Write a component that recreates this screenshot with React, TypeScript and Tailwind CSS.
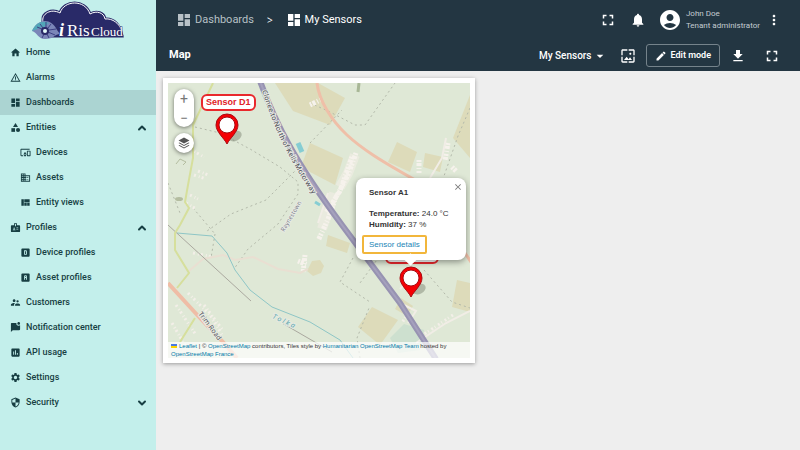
import type { ReactNode } from 'react';
import type { IconType } from 'react-icons';
import { ChevronDown, ChevronUp } from 'lucide-react';
import {
  MdAccountCircle,
  MdArrowDropDown,
  MdBadge,
  MdCategory,
  MdClose,
  MdDashboard,
  MdDevicesOther,
  MdDomain,
  MdEdit,
  MdFullscreen,
  MdGetApp,
  MdHome,
  MdInsertChart,
  MdMarkChatUnread,
  MdMoreVert,
  MdNotifications,
  MdSecurity,
  MdSettings,
  MdSupervisorAccount,
  MdViewQuilt,
  MdWallpaper,
  MdWarningAmber,
} from 'react-icons/md';

type MenuItem = {
  label: string;
  icon: IconType;
  child?: boolean;
  active?: boolean;
  toggle?: 'open' | 'closed';
};

const AlphaD = ({ className }: { className?: string }) => (
  <svg viewBox="0 0 24 24" fill="currentColor" className={className}>
    <path
      fillRule="evenodd"
      d="M5 3a2 2 0 0 0-2 2v14a2 2 0 0 0 2 2h14a2 2 0 0 0 2-2V5a2 2 0 0 0-2-2H5zm4 4h4a2 2 0 0 1 2 2v6a2 2 0 0 1-2 2H9V7zm2 2v6h2V9h-2z"
    />
  </svg>
);

const AlphaA = ({ className }: { className?: string }) => (
  <svg viewBox="0 0 24 24" fill="currentColor" className={className}>
    <path
      fillRule="evenodd"
      d="M5 3a2 2 0 0 0-2 2v14a2 2 0 0 0 2 2h14a2 2 0 0 0 2-2V5a2 2 0 0 0-2-2H5zm6 4h2a2 2 0 0 1 2 2v8h-2v-4h-2v4H9V9a2 2 0 0 1 2-2zm0 2v2h2V9h-2z"
    />
  </svg>
);

const menu: MenuItem[] = [
  { label: 'Home', icon: MdHome },
  { label: 'Alarms', icon: MdWarningAmber },
  { label: 'Dashboards', icon: MdDashboard, active: true },
  { label: 'Entities', icon: MdCategory, toggle: 'open' },
  { label: 'Devices', icon: MdDevicesOther, child: true },
  { label: 'Assets', icon: MdDomain, child: true },
  { label: 'Entity views', icon: MdViewQuilt, child: true },
  { label: 'Profiles', icon: MdBadge, toggle: 'open' },
  { label: 'Device profiles', icon: AlphaD, child: true },
  { label: 'Asset profiles', icon: AlphaA, child: true },
  { label: 'Customers', icon: MdSupervisorAccount },
  { label: 'Notification center', icon: MdMarkChatUnread },
  { label: 'API usage', icon: MdInsertChart },
  { label: 'Settings', icon: MdSettings },
  { label: 'Security', icon: MdSecurity, toggle: 'closed' },
];

const cloud =
  'M13 36V20c-1-6 8-12 17-7C34 0 55-1 60 14c7-4 14-1 15 5 9-1 15 6 17 17z';

const Logo = () => (
  <svg viewBox="0 0 96 40" className="ml-[30px] h-10 w-24" role="img" aria-label="iRisCloud">
    <path d={cloud} fill="#292a68" stroke="#292a68" strokeWidth="3" />
    <path d="M13 22c-2-8 8-14 17-9C34 0 55-1 60 14c7-4 14-1 15 5 8-1 14 5 16 10" fill="none" stroke="#fff" strokeWidth="1" />
    <path d="M2 31c5-12 19-14 25-1l3 4c-5 0-6 5-15 5C8 39 7 32 2 31z" fill="#7b86b8" />
    <path d="M2 31c4-9 11-11 17-8l-5 4c-5 0-7 3-12 4z" fill="#52a6b8" />
    <path
      d="M7 27l5 2M10 24l3 4M16 22v6M21 24l-3 4M26 29l-7 1M25 35l-7-3M19 38l-2-4M12 38l2-4"
      stroke="#3d4183"
      strokeWidth="1"
    />
    <circle cx="15" cy="31" r="4" fill="#292a68" />
    <circle cx="15" cy="31" r="2" fill="#e3fafa" />
    <g fontFamily="Liberation Serif, serif" fill="#fff" stroke="#292a68" strokeWidth="1" paintOrder="stroke">
      <text x="29" y="36" fontSize="18" fontStyle="italic" fontWeight="700">
        i
      </text>
      <text x="37" y="36" fontSize="17">
        Ris
      </text>
      <text x="61" y="36" fontSize="13">
        Cloud
      </text>
    </g>
  </svg>
);

const Sidebar = () => (
  <aside className="w-[156px] shrink-0 bg-[#c3efeb] text-[#173f43]">
    <Logo />
    <nav>
      {menu.map(({ label, icon: Icon, child, active, toggle }) => (
        <a
          key={label}
          href="#"
          className={`flex h-[25px] items-center gap-[5px] pr-2 text-[9px] font-medium ${
            child ? 'pl-5' : 'pl-[10px]'
          } ${active ? 'bg-[#abd4d2]' : ''}`}
        >
          <Icon className="size-[11px] shrink-0" />
          <span className="grow whitespace-nowrap">{label}</span>
          {toggle === 'open' && <ChevronUp className="size-3" strokeWidth={4} />}
          {toggle === 'closed' && <ChevronDown className="size-3" strokeWidth={4} />}
        </a>
      ))}
    </nav>
  </aside>
);

const IconButton = ({ label, children }: { label: string; children: ReactNode }) => (
  <button type="button" aria-label={label} className="flex size-5 items-center justify-center">
    {children}
  </button>
);

const Header = () => (
  <header className="bg-[#233642] text-white">
    <div className="flex h-10 items-center pr-[18px] pl-5">
      <a href="#" className="flex items-center gap-[3px] text-[11px] text-[#b8c1c6]">
        <MdDashboard className="size-4" />
        Dashboards
      </a>
      <span className="px-[13px] font-[Open_Sans,sans-serif] text-[10px]">&gt;</span>
      <a href="#" className="flex items-center gap-[3px] text-[11px]">
        <MdDashboard className="size-4" />
        My Sensors
      </a>
      <div className="ml-auto flex items-center gap-[10px]">
        <IconButton label="Fullscreen">
          <MdFullscreen className="size-[18px]" />
        </IconButton>
        <IconButton label="Notifications">
          <MdNotifications className="size-4" />
        </IconButton>
        <div className="flex items-center gap-1">
          <MdAccountCircle className="size-6" />
          <div className="text-[8px] leading-3 text-[#c4ccd1]">
            <p>John Doe</p>
            <p>Tenant administrator</p>
          </div>
        </div>
        <button type="button" aria-label="More" className="-ml-1">
          <MdMoreVert className="size-4" />
        </button>
      </div>
    </div>
    <div className="flex h-[31px] items-center pr-[18px] pl-[13px]">
      <h1 className="text-[11px] font-bold">Map</h1>
      <div className="ml-auto flex items-center">
        <button type="button" className="flex items-center text-[10px] font-medium">
          My Sensors
          <MdArrowDropDown className="size-4" />
        </button>
        <button type="button" aria-label="Image" className="ml-3">
          <MdWallpaper className="size-4" />
        </button>
        <button
          type="button"
          className="ml-[10px] flex h-[23px] items-center gap-1 rounded-[3px] border border-[#75838b] px-2 text-[9px] font-semibold"
        >
          <MdEdit className="size-3" />
          Edit mode
        </button>
        <div className="ml-2 flex gap-[14px]">
          <IconButton label="Download">
            <MdGetApp className="size-4" />
          </IconButton>
          <IconButton label="Expand">
            <MdFullscreen className="size-[18px]" />
          </IconButton>
        </div>
      </div>
    </div>
  </header>
);

const Terrain = () => (
  <svg viewBox="0 0 302 275" className="block w-full" fill="none">
    <rect width="302" height="275" fill="#dfe8d6" />
    <g fill="#dddbba">
      <path d="M107 0h43l27 15-15 27-37-14z" />
      <path d="M142 60l33 15-8 27-25-13-8-8z" />
      <path d="M229 59l20 10-7 20-22-10z" />
      <path d="M257 70l18 4-3 15-17-5z" />
      <path d="M302 12l-17 43 17 20z" />
      <path d="M204 224l26 13-18 25-22-18z" />
      <path d="M289 197l13 3v29l-18-5z" />
      <path d="M160 152l22 8-3 10-21-7z" />
      <path d="M144 178l8-1 4 6-3 7-8 3-6-5z" />
      <path d="M233 215l12 8-6 10-12-7z" />
    </g>
    <path d="M222 255l14-14 20 6-4 20-22 3z" fill="#cde0cf" />
    <g stroke="#b3b9aa" strokeDasharray="2 3">
      <path d="M27 44l25 6 30 16 30 18 18 15v12l-20 30-30 25-14 20" />
      <path d="M130 85l-32 32-35 14-24 17" />
      <path d="M142 20l18 8 27 14h10l30-42M142 60l32-33M302 25l-12 28-14 40" />
      <path d="M185 175l-13 24 30 20M214 170l-22 30M256 187l28 32 18 6M192 275l-3-20 12-30" />
      <path d="M25 125l22 26M47 151l-4 24M0 100l12 30" />
    </g>
    <g stroke="#f1ece5" strokeWidth="10" opacity="0.6">
      <path d="M187 72l-7 18-8 14M166 110l-12 36" />
    </g>
    <g stroke="#f6f2ec" strokeWidth="5" strokeDasharray="2 1 3 2 1 2">
      <path d="M188 70l-8 22-12 22-8 22-10 22M184 74l-12 34-14 22" />
      <path d="M251 77v14M280 60l-3 18M284 84l4 4M137 172l-2 18M130 178l10 4M142 22l12-6" />
    </g>
    <g stroke="#f3efe8" strokeWidth="3" strokeDasharray="2 3 1 2">
      <path d="M22 66l14 8M30 88l10 4M26 92l12 4M18 120l10 6M22 112l8 4" />
      <path d="M25 170l20 4M20 210l22 22 12 20M8 222l20 30M4 240l14 24M36 222l18 24M285 232l-30 20M240 230l-6 10" />
    </g>
    <g stroke="#f1ede6">
      <path d="M160 110l-10 30M262 95l12-20 4-20M232 220l16 8-8 12M248 260l30-20 24-12M242 196l-10 10" strokeWidth="2" />
    </g>
    <path d="M8 69l4-5 6 3-3 3" stroke="#b4bda0" strokeWidth="1" transform="translate(0 12)" />
    <path d="M21 188l14-12 20-4 12 5 18-3 25 12 22 4 8-4" stroke="#e9dfd2" strokeWidth="2" />
    <path
      d="M9 150l35 3 15 17 8 17 15 20 22 17 38 15 30 18 13 18"
      stroke="#8ec6c6"
      strokeWidth="1"
    />
    <path d="M0 142l83 76M114 240l50 29" stroke="#aaa89f" strokeWidth="1" />
    <path
      d="M45 0L25 42v33l-5 27-3 17 4 6-9 17-5 8v17l14 23-12 15M27 235l-15 24"
      stroke="#d6df9c"
      strokeWidth="2"
    />
    <ellipse cx="11" cy="116" rx="4" ry="2" fill="#b4bda0" />
    <path d="M149 0c2 18 15 38 30 52s34 26 70 46M297 170l8 12" stroke="#efbfa8" strokeWidth="3" />
    <path d="M0 200l32 35 23 24 14 16" stroke="#efbda6" strokeWidth="4" />
    <path d="M92 -2c16 44 36 82 82 144l58 78 36 56" stroke="#9793b2" strokeWidth="6" />
    <path d="M92 -2c16 44 36 82 82 144l58 78 36 56" stroke="#a5a1bd" strokeWidth="2" />
    <path d="M130 60l4 9" stroke="#86cdd3" strokeWidth="5" />
    <path d="M147 119l5 3" stroke="#86cdd3" strokeWidth="3" />
    <path d="M191 0l-1 9" stroke="#a8b796" strokeWidth="3" />
    <defs>
      <path id="motorway" d="M94 8c12 36 24 66 62 120" />
      <path id="river" d="M104 235l30 14" />
      <path id="trim" d="M30 231l28 37" />
      <path id="town" d="M116 149l24-40" />
    </defs>
    <g fontFamily="Noto Sans, sans-serif" fill="#57565e" stroke="#e6eae2" strokeWidth="2" paintOrder="stroke">
      <text fontSize="7" fontWeight="500">
        <textPath href="#motorway">Clonee to North of Kells Motorway</textPath>
      </text>
      <text fontSize="7">
        <textPath href="#trim">Trim Road</textPath>
      </text>
      <text fontSize="6" fill="#7c7c8c">
        <textPath href="#town">Raynestown</textPath>
      </text>
      <text fontSize="7" fontStyle="italic" fill="#5aa7b0">
        <textPath href="#river">T o l k a</textPath>
      </text>
    </g>
  </svg>
);

const Pin = () => (
  <svg viewBox="0 0 34 32" className="h-8 w-[34px]">
    <ellipse cx="20" cy="23" rx="7" ry="5" fill="#69705f" opacity=".4" transform="rotate(-25 20 23)" />
    <path d="M12 31C9 25 1 19 1 12a11 11 0 0 1 22 0c0 7-8 13-11 19z" fill="#f50005" stroke="#a60b12" strokeWidth="1" />
    <circle cx="12" cy="12" r="8" fill="#fff" stroke="#a60b12" strokeWidth="1" />
  </svg>
);

const MarkerLabel = ({ children }: { children: ReactNode }) => (
  <span className="rounded-md border-2 border-[#e9282c] bg-white px-[3px] font-[Liberation_Sans,sans-serif] text-[9px] leading-[13px] font-bold whitespace-nowrap text-[#e02226]">
    {children}
  </span>
);

const Popup = () => (
  <div className="absolute top-[95px] left-[188px] w-[110px] rounded-lg bg-white pt-[9px] pr-2 pb-[6px] pl-[6px] text-[9px] leading-[11px] text-[#333] shadow-[0_2px_6px_rgba(0,0,0,0.4)]">
    <button type="button" aria-label="Close" className="absolute top-1 right-[3px] text-[#777]">
      <MdClose className="size-[10px]" />
    </button>
    <div className="pl-[7px] font-[Liberation_Sans,sans-serif] text-[8px]">
      <p className="font-bold">Sensor A1</p>
      <p className="mt-[10px]">
        <b>Temperature:</b> 24.0 °C
      </p>
      <p>
        <b>Humidity:</b> 37 %
      </p>
    </div>
    <a
      href="#"
      className="mt-[5px] inline-block rounded-xs border-2 border-[#f2b63b] px-[5px] py-[2px] font-[Liberation_Sans,sans-serif] text-[8px] text-[#2385b5]"
    >
      Sensor details
    </a>
    <span className="absolute -bottom-1 left-[50px] size-[9px] rotate-45 bg-white" />
  </div>
);

const Attribution = () => (
  <p className="absolute inset-x-0 bottom-0 bg-white/70 px-[3px] font-[Liberation_Sans,sans-serif] text-[6px] leading-2 text-[#333]">
    <svg viewBox="0 0 12 8" className="mr-[2px] inline h-1 w-[6px] align-baseline">
      <path fill="#4c7be1" d="M0 0h12v4H0z" />
      <path fill="#ffd500" d="M0 4h12v4H0z" />
    </svg>
    <a href="#" className="text-[#0078a8]">Leaflet</a> | ©{' '}
    <a href="#" className="text-[#0078a8]">OpenStreetMap</a> contributors, Tiles style by{' '}
    <a href="#" className="text-[#0078a8]">Humanitarian OpenStreetMap Team</a> hosted by{' '}
    <a href="#" className="text-[#0078a8]">OpenStreetMap France</a>
  </p>
);

const MapWidget = () => (
  <section className="w-1/2 max-w-[312px] bg-white p-[5px] shadow-[0_1px_4px_rgba(0,0,0,0.35)]">
    <div className="relative overflow-hidden">
      <Terrain />
      <div className="absolute top-[6px] left-[6px] flex flex-col gap-[6px]">
        <div className="flex w-5 flex-col rounded-full bg-white text-[#777] shadow-[0_1px_4px_rgba(0,0,0,0.5)]">
          <button type="button" className="h-[19px] text-sm leading-5">+</button>
          <button type="button" className="h-[19px] text-sm leading-[18px]">−</button>
        </div>
        <button
          type="button"
          aria-label="Layers"
          className="flex size-5 items-center justify-center rounded-full bg-white shadow-[0_1px_4px_rgba(0,0,0,0.5)]"
        >
          <svg viewBox="0 0 24 24" className="size-3" fill="#555">
            <path d="M12 1l11 6-11 6L1 7zM3 11l9 5 9-5 2 1-11 6-11-6zM3 16l9 5 9-5 2 1-11 6-11-6z" />
          </svg>
        </button>
      </div>
      <div className="absolute top-[11px] left-[33px] flex flex-col">
        <MarkerLabel>Sensor D1</MarkerLabel>
        <span className="pt-[2px] pl-[14px]">
          <Pin />
        </span>
      </div>
      <div className="absolute top-[164px] left-[217px] flex flex-col">
        <MarkerLabel>Sensor A1</MarkerLabel>
        <span className="pt-[2px] pl-[14px]">
          <Pin />
        </span>
      </div>
      <Popup />
      <Attribution />
    </div>
  </section>
);

const App = () => (
  <div className="flex min-h-screen bg-[#eeeeee] font-[Roboto,sans-serif]">
    <Sidebar />
    <div className="min-w-0 grow">
      <Header />
      <main className="p-[7px]">
        <MapWidget />
      </main>
    </div>
  </div>
);

export default App;
